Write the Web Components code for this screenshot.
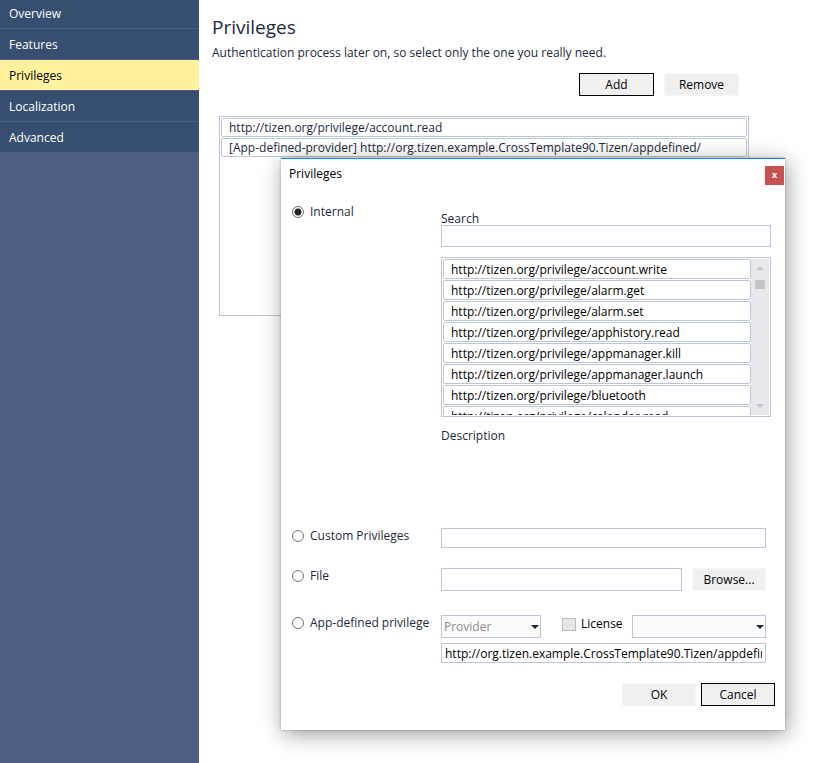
<!DOCTYPE html>
<html lang="en">
<head>
<meta charset="utf-8">
<title>Privileges</title>
<style>
html, body { height: 100%; }
body {
  margin: 0;
  background: #fff;
  color: #1b293e;
  font: 12px/16px "Open Sans", "Noto Sans", sans-serif;
  --line: #bcc5dc;
}
</style>
</head>
<body>
<manifest-editor></manifest-editor>

<template id="manifest-editor">
  <style>
    :host { display: flex; min-height: 100%; position: relative; overflow: hidden; }
    side-nav { flex: 0 0 199px; }
    main { flex: 1; min-width: 0; position: relative; }
    .page { padding: 14px 65px 0 13px; }
    h1 { margin: 0; font-size: 19px; line-height: 26px; font-weight: 400; }
    p { margin: 5px 0 0; }
    .actions { display: flex; justify-content: flex-end; gap: 10px; margin: 12px 10px 0 0; }
    privilege-list { height: 200px; margin: 20px 0 0 7px; }
    privilege-dialog { position: absolute; top: 158px; left: 82px; right: 29px; }
  </style>
  <side-nav>
    <nav-item>Overview</nav-item>
    <nav-item>Features</nav-item>
    <nav-item current>Privileges</nav-item>
    <nav-item>Localization</nav-item>
    <nav-item>Advanced</nav-item>
  </side-nav>
  <main>
    <div class="page">
      <h1>Privileges</h1>
      <p>Authentication process later on, so select only the one you really need.</p>
      <div class="actions">
        <push-button primary>Add</push-button>
        <push-button>Remove</push-button>
      </div>
      <privilege-list>
        <privilege-item>http://tizen.org/privilege/account.read</privilege-item>
        <privilege-item>[App-defined-provider] http://org.tizen.example.CrossTemplate90.Tizen/appdefined/</privilege-item>
      </privilege-list>
    </div>
    <privilege-dialog></privilege-dialog>
  </main>
</template>

<template id="side-nav">
  <style>
    :host { display: block; background: #4d6082; }
    nav { display: flex; flex-direction: column; overflow: hidden; }
    ::slotted(:first-child) { margin-top: -2px; }
  </style>
  <nav aria-label="Manifest sections"><slot></slot></nav>
</template>

<template id="nav-item">
  <style>
    :host { display: block; background: #364e6f; border-bottom: 1px solid #4d6082; color: #fff; }
    :host([current]) { background: #fff29d; color: #000; }
    a { display: block; padding: 8px 9px 6px; color: inherit; text-decoration: none; }
  </style>
  <a href="#"><slot></slot></a>
</template>

<template id="push-button">
  <style>
    :host { display: block; width: 75px; }
    button {
      display: block; width: 100%; height: 23px; padding: 0;
      border: 1px solid #f5f6fa; border-radius: 0; background: #f0f0f0;
      color: #000; font: inherit;
    }
    :host([primary]) button { border-color: #000; }
  </style>
  <button type="button"><slot></slot></button>
</template>

<template id="privilege-list">
  <style>
    :host { display: flex; box-sizing: border-box; border: 1px solid var(--line); padding: 1px; }
    .rows { flex: 1; min-width: 0; overflow: hidden; }
    scroll-track { display: none; }
    :host([scrolling]) scroll-track { display: block; }
  </style>
  <div class="rows" role="list"><slot></slot></div>
  <scroll-track></scroll-track>
</template>

<template id="privilege-item">
  <style>
    :host {
      display: block; box-sizing: border-box; height: var(--row, 19px); margin-bottom: 1px; padding: 0 7px;
      border: 1px solid var(--line); border-radius: 2px;
      line-height: var(--row-line, 17px); white-space: nowrap; overflow: hidden;
    }
  </style>
  <slot></slot>
</template>

<template id="scroll-track">
  <style>
    :host { width: 18px; background: #e8e8ec; }
    div { display: flex; flex-direction: column; align-items: center; height: 100%; }
    svg { display: block; width: 8px; height: 4px; margin: 7px 0 10px; fill: #c2c3c9; }
    span { width: 10px; height: 9px; background: #c2c3c9; }
    svg:last-child { margin: auto 0 7px; }
  </style>
  <div aria-hidden="true">
    <svg viewBox="0 0 8 4"><path d="M0 4 4 0l4 4z"/></svg>
    <span></span>
    <svg viewBox="0 0 8 4"><path d="M0 0h8L4 4z"/></svg>
  </div>
</template>

<template id="select-box">
  <style>
    :host { display: grid; height: 23px; }
    select, svg { grid-area: 1 / 1; }
    select {
      appearance: none; width: 100%; margin: 0; padding: 0 16px 0 2px;
      border: 1px solid var(--line); border-radius: 0; background: #fcfcfc;
      color: #8c8c8c; opacity: 1; font: inherit;
    }
    svg { width: 8px; height: 4px; margin-right: 2px; place-self: center end; fill: #1b293e; pointer-events: none; }
  </style>
  <select></select>
  <svg viewBox="0 0 8 4" aria-hidden="true"><path d="M0 0h8L4 4z"/></svg>
</template>

<template id="privilege-dialog">
  <style>
    :host {
      display: block; box-sizing: border-box; background: #fff; border-top: 1px solid #1883d7;
      box-shadow: 2px 4px 20px rgba(0, 0, 0, .4), 0 0 2px rgba(0, 0, 0, .3);
    }
    header { display: flex; justify-content: space-between; align-items: flex-start; padding: 7px 1px 0 8px; color: #000; }
    .close {
      display: grid; place-items: center; width: 19px; height: 19px; padding: 0 0 2px; border: 0; background: #c75050;
      color: #fff; font: bold 9px/16px "Open Sans", sans-serif;
    }
    form {
      display: grid; grid-template-columns: 149px minmax(0, 1fr);
      padding: 19px 14px 24px 11px;
    }
    .choice { display: flex; align-items: center; gap: 6px; height: 16px; }
    input[type="radio"] {
      appearance: none; box-sizing: border-box; flex: none; width: 12px; height: 12px; margin: 0;
      border: 1px solid #707070; border-radius: 50%; background: #fff;
    }
    input[type="radio"]:checked { background: radial-gradient(circle, #212121 3px, #fff 4px); }
    input[type="text"], input[type="search"] {
      appearance: none; display: block; box-sizing: border-box; width: 100%; height: 20px; margin: 0; padding: 0 3px;
      border: 1px solid var(--line); border-radius: 0; background: #fff; color: #000; font: inherit; outline: 0;
    }
    .internal { padding-top: 7px; height: 324px; box-sizing: border-box; }
    .internal label { display: block; height: 14px; }
    .internal input { height: 22px; }
    .internal privilege-list { height: 160px; margin: 10px 0 11px; color: #000; --row: 20px; --row-line: 20px; }
    .narrow, .file { margin-right: 5px; }
    .custom { height: 40px; }
    .file { display: flex; align-items: flex-start; gap: 10px; height: 47px; }
    .file input { flex: 1; min-width: 0; height: 23px; }
    .file push-button, footer push-button { width: 74px; }
    .app { display: flex; align-items: flex-start; margin-bottom: 5px; }
    .provider { flex: 0 0 100px; }
    .license { display: flex; align-items: center; gap: 5px; height: 18px; margin: 0 9px 0 21px; color: #000; }
    input[type="checkbox"] {
      appearance: none; box-sizing: border-box; width: 14px; height: 13px; margin: 0;
      border: 1px solid #bcbcbc; background: #e6e6e6;
    }
    .kind { flex: 1; min-width: 0; }
    footer { grid-column: 1 / -1; display: flex; justify-content: flex-end; gap: 5px; padding-top: 20px; margin-right: -4px; }
  </style>
  <header>
    <span>Privileges</span>
    <button class="close" type="button" aria-label="Close">x</button>
  </header>
  <form>
    <label class="choice"><input type="radio" name="source" checked>Internal</label>
    <div class="internal">
      <label for="search">Search</label>
      <input id="search" type="search">
      <privilege-list scrolling>
        <privilege-item>http://tizen.org/privilege/account.write</privilege-item>
        <privilege-item>http://tizen.org/privilege/alarm.get</privilege-item>
        <privilege-item>http://tizen.org/privilege/alarm.set</privilege-item>
        <privilege-item>http://tizen.org/privilege/apphistory.read</privilege-item>
        <privilege-item>http://tizen.org/privilege/appmanager.kill</privilege-item>
        <privilege-item>http://tizen.org/privilege/appmanager.launch</privilege-item>
        <privilege-item>http://tizen.org/privilege/bluetooth</privilege-item>
        <privilege-item>http://tizen.org/privilege/calendar.read</privilege-item>
      </privilege-list>
      <div>Description</div>
    </div>
    <label class="choice"><input type="radio" name="source">Custom Privileges</label>
    <div class="custom narrow"><input type="text" aria-label="Custom privilege"></div>
    <label class="choice"><input type="radio" name="source">File</label>
    <div class="file"><input type="text" aria-label="File path"><push-button>Browse...</push-button></div>
    <label class="choice"><input type="radio" name="source">App-defined privilege</label>
    <div class="narrow">
      <div class="app">
        <select-box class="provider" label="Role">Provider</select-box>
        <label class="license"><input type="checkbox" disabled>License</label>
        <select-box class="kind" label="License type"></select-box>
      </div>
      <input type="text" aria-label="App-defined privilege" value="http://org.tizen.example.CrossTemplate90.Tizen/appdefined/">
    </div>
    <footer>
      <push-button>OK</push-button>
      <push-button primary>Cancel</push-button>
    </footer>
  </form>
</template>

<script>
class TemplateElement extends HTMLElement {
  constructor() {
    super();
    const template = document.getElementById(this.localName);
    this.attachShadow({ mode: 'open' }).append(template.content.cloneNode(true));
  }
}

class SelectBox extends TemplateElement {
  connectedCallback() {
    const select = this.shadowRoot.querySelector('select');
    const text = this.textContent.trim();
    select.setAttribute('aria-label', this.getAttribute('label'));
    select.replaceChildren(new Option(text, text));
    select.disabled = true;
  }
}

class PrivilegeItem extends TemplateElement {
  connectedCallback() {
    this.setAttribute('role', 'listitem');
  }
}

class PrivilegeDialog extends TemplateElement {
  connectedCallback() {
    this.setAttribute('role', 'dialog');
    this.setAttribute('aria-label', 'Privileges');
    this.shadowRoot.querySelector('.close').addEventListener('click', () => this.remove());
  }
}

customElements.define('scroll-track', class extends TemplateElement {});
customElements.define('privilege-item', PrivilegeItem);
customElements.define('privilege-list', class extends TemplateElement {});
customElements.define('push-button', class extends TemplateElement {});
customElements.define('select-box', SelectBox);
customElements.define('nav-item', class extends TemplateElement {});
customElements.define('side-nav', class extends TemplateElement {});
customElements.define('privilege-dialog', PrivilegeDialog);
customElements.define('manifest-editor', class extends TemplateElement {});
</script>
</body>
</html>
